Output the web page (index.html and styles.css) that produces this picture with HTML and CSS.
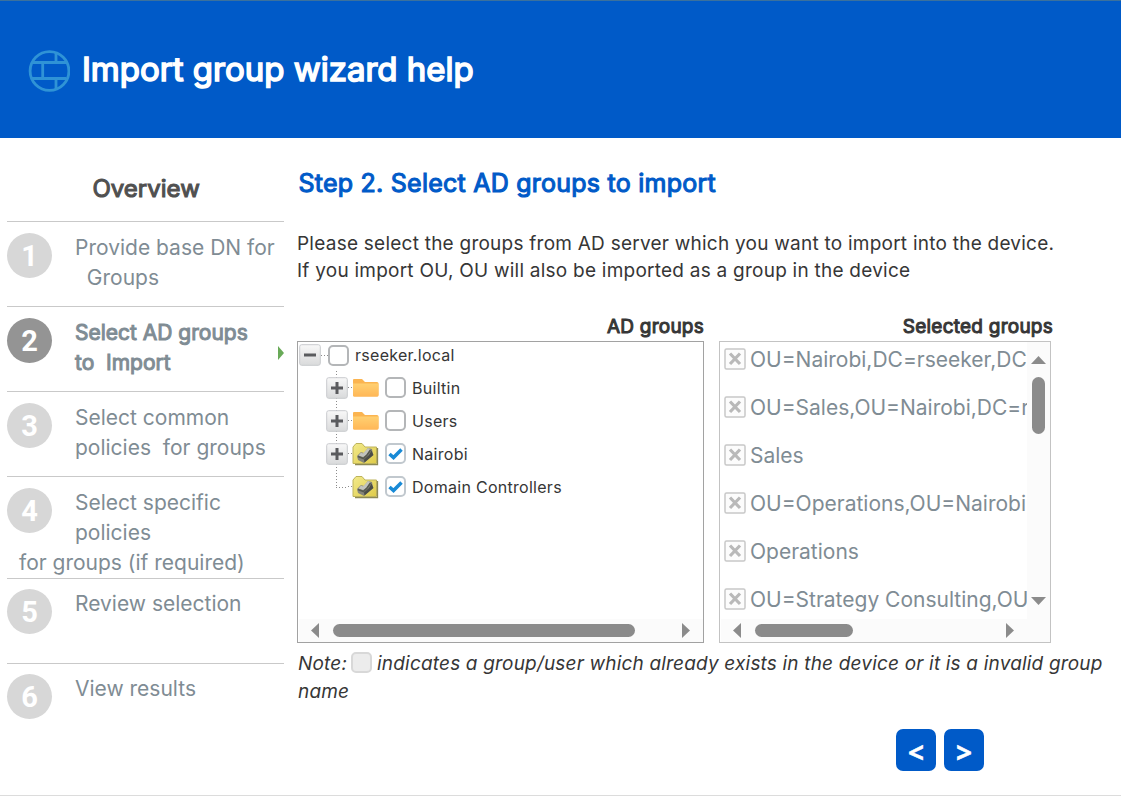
FILE: index.html
```
<!DOCTYPE html>
<html lang="en">
<head>
<meta charset="utf-8">
<title>Import group wizard help</title>
<link rel="stylesheet" href="styles.css">
</head>
<body>
<svg class="defs" aria-hidden="true">
  <defs>
    <linearGradient id="btn" x1="0" y1="0" x2="0" y2="1"><stop offset="0" stop-color="#f8f8f8"/><stop offset="1" stop-color="#d9dadb"/></linearGradient>
    <linearGradient id="fold" x1="0" y1="0" x2="0" y2="1"><stop offset="0" stop-color="#ffd071"/><stop offset="1" stop-color="#ffb757"/></linearGradient>
    <linearGradient id="ou" x1="0" y1="0" x2="1" y2="1"><stop offset="0" stop-color="#f2ea8c"/><stop offset="1" stop-color="#dfcb4a"/></linearGradient>
    <symbol id="plus" viewBox="0 0 22 22"><rect x=".7" y=".7" width="20.6" height="20.6" rx="2" fill="url(#btn)" stroke="#c9cbce"/><path d="M5 11H17M11 5V17" stroke="#5a5b5e" stroke-width="3"/></symbol>
    <symbol id="minus" viewBox="0 0 22 22"><rect x=".7" y=".7" width="20.6" height="20.6" rx="2" fill="url(#btn)" stroke="#c9cbce"/><path d="M5 11H17" stroke="#5a5b5e" stroke-width="3"/></symbol>
    <symbol id="folder" viewBox="0 0 26 18"><path d="M0 1Q0 0 1 0H9L12 3H24Q25.500 3 25.500 4.500V16Q25.500 17.500 24 17.500H1.500Q0 17.500 0 16Z" fill="#fbb450"/><path d="M0 4.500H25.500V16Q25.500 17.500 24 17.500H1.500Q0 17.500 0 16Z" fill="url(#fold)"/></symbol>
    <symbol id="unit" viewBox="0 0 27 24">
      <path d="M1 5L4 1.500H10L13 5H24.500V21.500H1Z" fill="url(#ou)" stroke="#bdb35c"/>
      <path d="M25.500 6V22.700H3" fill="none" stroke="#8d8954" stroke-width="1.300"/>
      <path d="M5 14L9 10L12 11L16 6L20 7L21 13L12 21L6 18Z" fill="#85857a"/>
      <path d="M11 11.500L16 6L18.500 7L15 12.500L11 15L6.500 13.500L9 10.500Z" fill="#c1c3bd"/>
      <path d="M12 17.500L17 13L19.500 8.500L21.500 13L12.500 20.500Z" fill="#4b4d48"/>
      <path d="M6 14.500L11.500 16.500L15 13L18.500 8" fill="none" stroke="#56594f" stroke-width="1.600"/>
    </symbol>
    <symbol id="remove" viewBox="0 0 22 22"><rect x="1" y="1" width="20" height="20" rx="1.500" fill="#fcfcfc" stroke="#c8c8c8" stroke-width="1.500"/><path d="M6 5.500L16 16M16 5.500L6 16" stroke="#b9b9b9" stroke-width="3.200"/></symbol>
    <symbol id="left" viewBox="0 0 8 15"><path d="M8 0V15L0 7.500Z" fill="#8b8b8b"/></symbol>
    <symbol id="right" viewBox="0 0 8 15"><path d="M0 0V15L8 7.500Z" fill="#8b8b8b"/></symbol>
    <symbol id="up" viewBox="0 0 15 8"><path d="M0 8H15L7.500 0Z" fill="#8b8b8b"/></symbol>
    <symbol id="down" viewBox="0 0 15 8"><path d="M0 0H15L7.500 8Z" fill="#8b8b8b"/></symbol>
    <symbol id="tick" viewBox="0 0 17 17"><path d="M2.500 9L6.500 12.500L14.500 4.500" fill="none" stroke="#188ad6" stroke-width="3.500"/></symbol>
  </defs>
</svg>
<div class="page">
  <header class="banner">
    <svg class="logo" viewBox="0 0 42 42" fill="none" stroke="#2f93d6" stroke-width="2.800"><circle cx="21.500" cy="21" r="19.400"/><path d="M4 12.500H38.500M28 3V12.500M14.700 12.500V28.500M4 28.500H38.500M28 28.500V39"/></svg>
    <h1 class="title">Import group wizard help</h1>
  </header>
  <div class="main">
    <nav class="nav">
      <h2 class="nav-title">Overview</h2>
      <div class="step"><span class="num">1</span><p class="label">Provide base DN for<br>&nbsp; Groups</p></div>
      <div class="step active"><span class="num">2</span><p class="label">Select AD groups<br>to &nbsp;Import</p><span class="arrow"></span></div>
      <div class="step"><span class="num">3</span><p class="label">Select common<br>policies &nbsp;for groups</p></div>
      <div class="step tall"><span class="num">4</span><p class="label">Select specific<br>policies<span class="outdent">for groups (if required)</span></p></div>
      <div class="step snug"><span class="num">5</span><p class="label">Review selection</p></div>
      <div class="step snug"><span class="num">6</span><p class="label">View results</p></div>
    </nav>
    <main class="content">
      <h2 class="heading">Step 2. Select AD groups to import</h2>
      <p class="intro">Please select the groups from AD server which you want to import into the device.<br>If you import OU, OU will also be imported as a group in the device</p>
      <div class="panels">
        <section class="source">
          <h3 class="panel-title">AD groups</h3>
          <div class="panel dark">
            <div class="tree">
              <div class="row root"><svg class="toggle"><use href="#minus"/></svg><i class="dots"></i><span class="check"></span><span class="name">rseeker.local</span></div>
              <div class="branch">
                <div class="row"><svg class="toggle"><use href="#plus"/></svg><i class="dots"></i><svg class="folder"><use href="#folder"/></svg><span class="check"></span><span class="name">Builtin</span></div>
                <div class="row"><svg class="toggle"><use href="#plus"/></svg><i class="dots"></i><svg class="folder"><use href="#folder"/></svg><span class="check"></span><span class="name">Users</span></div>
                <div class="row"><svg class="toggle"><use href="#plus"/></svg><i class="dots"></i><svg class="unit"><use href="#unit"/></svg><span class="check on"><svg class="tick"><use href="#tick"/></svg></span><span class="name">Nairobi</span></div>
                <div class="row"><span class="toggle elbow"></span><i class="dots"></i><svg class="unit"><use href="#unit"/></svg><span class="check on"><svg class="tick"><use href="#tick"/></svg></span><span class="name">Domain Controllers</span></div>
              </div>
            </div>
            <div class="hbar"><svg class="ha"><use href="#left"/></svg><span class="thumb"></span><svg class="ha"><use href="#right"/></svg></div>
          </div>
        </section>
        <section class="target">
          <h3 class="panel-title wide">Selected groups</h3>
          <div class="panel">
            <div class="upper">
              <ul class="list">
                <li class="item"><svg class="remove"><use href="#remove"/></svg>OU=Nairobi,DC=rseeker,DC</li>
                <li class="item"><svg class="remove"><use href="#remove"/></svg>OU=Sales,OU=Nairobi,DC=r</li>
                <li class="item"><svg class="remove"><use href="#remove"/></svg>Sales</li>
                <li class="item"><svg class="remove"><use href="#remove"/></svg>OU=Operations,OU=Nairobi</li>
                <li class="item"><svg class="remove"><use href="#remove"/></svg>Operations</li>
                <li class="item"><svg class="remove"><use href="#remove"/></svg>OU=Strategy Consulting,OU</li>
              </ul>
              <div class="vbar"><svg class="va"><use href="#up"/></svg><span class="thumb"></span><svg class="va end"><use href="#down"/></svg></div>
            </div>
            <div class="hbar short"><svg class="ha"><use href="#left"/></svg><span class="thumb"></span><svg class="ha"><use href="#right"/></svg></div>
          </div>
        </section>
      </div>
      <p class="note">Note:<span class="check disabled"></span>indicates a group/user which already exists in the device or it is a invalid group<br>name</p>
      <div class="buttons"><button class="btn">&lt;</button><button class="btn">&gt;</button></div>
    </main>
  </div>
</div>
</body>
</html>
```
FILE: styles.css
```
* { box-sizing: border-box; }
body { margin: 0; background: #fff; color: #363636; font-family: Inter, "Liberation Sans", sans-serif; }
h1, h2, h3, p, ul { margin: 0; padding: 0; font-weight: 400; }
svg { display: block; flex: none; }
.defs { position: absolute; width: 0; height: 0; }

.page { height: 796px; border-bottom: 1px solid #dcdcdc; overflow: hidden; }
.banner { height: 138px; border-top: 1px solid #3b719d; background: #005ac8; display: flex; align-items: center; padding: 3px 0 0 28px; }
.logo { width: 42px; height: 42px; margin-right: 10px; }
.title { color: #fff; font-size: 33px; line-height: 40px; margin-top: -4px; padding-left: 2px; -webkit-text-stroke: 1.6px #fff; }

.main { display: flex; height: 657px; }
.nav { width: 277px; margin-left: 7px; flex: none; }
.nav-title { height: 83px; padding: 35px 0 0 85.5px; font-size: 24px; line-height: 32px; color: #505050; -webkit-text-stroke: 1.1px #505050; }
.step { display: flex; height: 85px; border-top: 1px solid #c9c9c9; padding-top: 11px; }
.step.tall { height: 102px; }
.step.snug { padding-top: 10px; }
.num { flex: none; width: 45px; height: 45px; border-radius: 50%; background: #d7d7d7; color: #fff; font: 700 29px/46px Roboto, sans-serif; text-align: center; }
.label { margin-left: 23px; font-size: 21px; line-height: 30px; color: #7f8c94; white-space: nowrap; }
.active .num { background: #949494; }
.active .label { -webkit-text-stroke: 1px #7f8c94; }
.arrow { margin: 28px 0 0 auto; width: 6px; height: 14px; background: #69aa58; clip-path: polygon(0 0, 100% 50%, 0 100%); }
.outdent { display: block; margin-left: -56px; }

.content { flex: 1; margin-left: 13px; }
.heading { padding: 28px 0 0 1.5px; font-size: 25px; line-height: 34px; letter-spacing: 0.24px; color: #005ac8; -webkit-text-stroke: 1.1px #005ac8; }
.intro { margin-top: 30px; font-size: 19px; line-height: 27px; letter-spacing: 0.24px; white-space: nowrap; }
.panels { display: flex; gap: 15px; margin-top: 26px; }
.source { width: 407px; }
.target { width: 332px; }
.panel-title { height: 31px; font-size: 19px; line-height: 34px; letter-spacing: 0.24px; text-align: right; -webkit-text-stroke: 1px #363636; }
.panel-title.wide { margin-right: -2px; }
.panel { height: 302px; border: 1px solid #c3c3c3; display: flex; flex-direction: column; }
.panel.dark { border-color: #a2a2a2; }
.tree { flex: 1; padding-left: 1px; }
.row { display: flex; align-items: center; height: 33px; font-size: 16px; letter-spacing: 0.28px; }
.root { height: 26px; }
.branch { padding: 3px 0 0 27px; }
.branch .row { background: repeating-linear-gradient(#8c8c8c 0 1px, transparent 1px 3px) 10px 0 / 1px 100% no-repeat; }
.branch .row:last-child { background-size: 1px 17px; }
.toggle { width: 22px; height: 22px; flex: none; }
.elbow { background: repeating-linear-gradient(90deg, #8c8c8c 0 1px, transparent 1px 3px) 10px 11px / 12px 1px no-repeat; }
.dots { width: 5px; height: 1px; background: repeating-linear-gradient(90deg, #8c8c8c 0 1px, transparent 1px 3px); flex: none; }
.root .dots { width: 7px; }
.folder { width: 26px; height: 18px; margin-right: 6px; }
.unit { width: 27px; height: 24px; margin: 0 6px 0 -1px; }
.check { flex: none; width: 21px; height: 21px; border: 2px solid #b4b6b8; border-radius: 5px; background: #fff; }
.check.on { border-color: #c1c8ce; }
.tick { width: 17px; height: 17px; }
.name { margin-left: 6px; }
.hbar { flex: none; height: 23px; margin-left: 1px; background: #fbfbfb; display: flex; align-items: center; padding: 0 13px 0 12px; }
.ha { width: 8px; height: 15px; }
.hbar .thumb { width: 302px; height: 13px; border-radius: 7px; background: #8b8b8b; margin: 0 auto 0 14px; }
.short.hbar { padding-right: 36px; }
.short.hbar .thumb { width: 98px; }
.upper { flex: 1; display: flex; min-height: 0; }
.list { width: 308px; overflow: hidden; list-style: none; padding: 5px 0 0 4px; }
.item { display: flex; gap: 4px; height: 48px; font-size: 21px; line-height: 26px; color: #7f8c94; white-space: nowrap; }
.remove { width: 22px; height: 22px; margin-top: 1px; }
.vbar { width: 23px; margin-left: auto; background: #fbfbfb; display: flex; flex-direction: column; align-items: center; padding: 14px 0 14px; }
.va { width: 15px; height: 8px; }
.va.end { margin-top: auto; }
.vbar .thumb { width: 13px; height: 57px; margin-top: 13px; border-radius: 7px; background: #8b8b8b; }
.note { font-size: 19px; line-height: 28px; font-style: italic; letter-spacing: 0.18px; margin: 7px 0 0 1px; white-space: nowrap; }
.disabled { display: inline-block; vertical-align: -3px; margin: 0 5px 0 4px; background: #ececec; border-color: #d8d8d8; }
.buttons { display: flex; gap: 8px; margin: 23px 0 0 599px; }
.btn { width: 40px; height: 42px; border: 0; border-radius: 7px; padding: 4px 0 0; background: #005ac8; color: #fff; font: 700 28px/38px "Open Sans", sans-serif; -webkit-text-stroke: 0.4px #fff; }
```
